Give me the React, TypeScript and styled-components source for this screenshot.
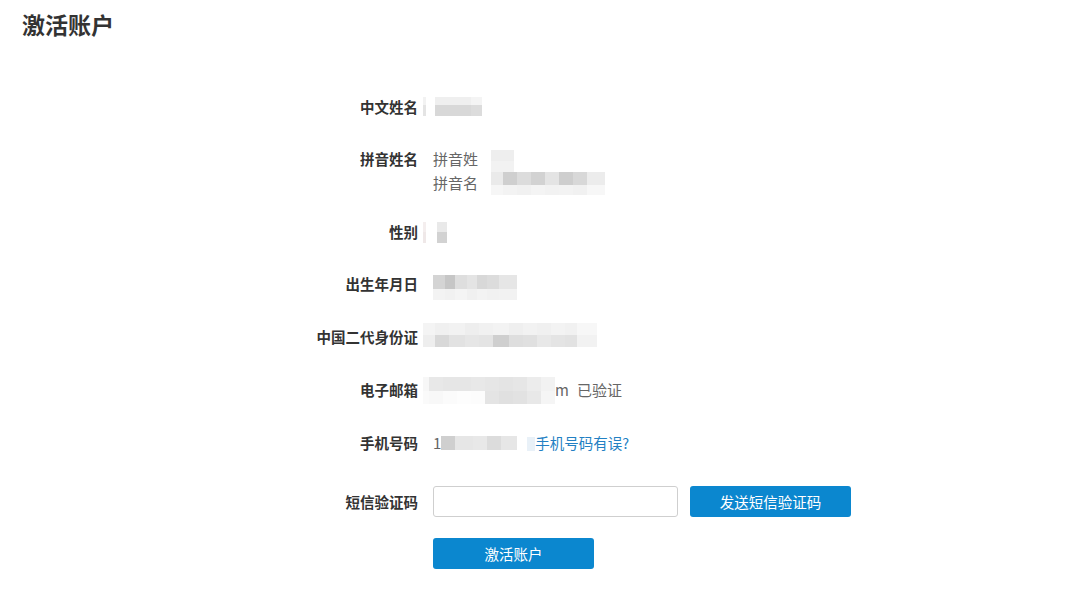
import React from "react";
import styled, { createGlobalStyle } from "styled-components";

const GlobalStyle = createGlobalStyle`
  body {
    margin: 0;
    background: #fff;
    font-family: "Noto Sans CJK SC", "Noto Sans", sans-serif;
    color: #333;
  }
`;

// pixelated blocks standing in for the blurred personal data
type MosaicData = {
  cols: string;
  rows: string;
  cells: string[][];
};

const nameMosaic: MosaicData = {
  cols: "3px 9px 12px 12px 12px 11px",
  rows: "8px 11px",
  cells: [
    ["#f2f2f2", "#fff", "#efefef", "#efefef", "#efefef", "#f4f4f4"],
    ["#e4e4e4", "#fff", "#d8d8d8", "#d8d8d8", "#d8d8d8", "#dcdcdc"],
  ],
};

const surnameMosaic: MosaicData = {
  cols: "23px",
  rows: "11px 11px",
  cells: [["#eeeeee"], ["#f2f2f2"]],
};

const givenMosaic: MosaicData = {
  cols: "12px 14px 14px 14px 14px 14px 14px 18px",
  rows: "13px 10px",
  cells: [
    ["#eaeaea", "#cfcfcf", "#dcdcdc", "#d2d2d2", "#e4e4e4", "#cecece", "#d8d8d8", "#ececec"],
    ["#f6f6f6", "#f3f3f3", "#f1f1f1", "#f4f4f4", "#f2f2f2", "#f3f3f3", "#f1f1f1", "#f7f7f7"],
  ],
};

const genderMosaic: MosaicData = {
  cols: "3px 11px 10px",
  rows: "10px 11px",
  cells: [
    ["#f4eeee", "#fff", "#e9e9e9"],
    ["#efe8e8", "#fff", "#d2d2d2"],
  ],
};

const birthMosaic: MosaicData = {
  cols: "12px 10px 12px 10px 10px 12px 18px",
  rows: "14px 11px",
  cells: [
    ["#d4d4d4", "#c6c6c6", "#dedede", "#e4e4e4", "#d8d8d8", "#dcdcdc", "#e6e6e6"],
    ["#f3f3f3", "#f1f1f1", "#f4f4f4", "#f0f0f0", "#f3f3f3", "#f1f1f1", "#f2f2f2"],
  ],
};

const idMosaic: MosaicData = {
  cols: "12px 14px 16px 14px 14px 16px 14px 14px 14px 14px 12px 20px",
  rows: "12px 12px",
  cells: [
    ["#f4f4f4", "#f0f0f0", "#f2f2f2", "#eeeeee", "#f1f1f1", "#f3f3f3", "#efefef", "#f2f2f2", "#f0f0f0", "#f3f3f3", "#f1f1f1", "#f7f7f7"],
    ["#eeeeee", "#d8d8d8", "#e2e2e2", "#e6e6e6", "#e4e4e4", "#cfcfcf", "#dedede", "#e0e0e0", "#e8e8e8", "#e4e4e4", "#e2e2e2", "#f2f2f2"],
  ],
};

const emailMosaic: MosaicData = {
  cols: "6px 14px 14px 14px 14px 14px 14px 14px 14px 14px",
  rows: "14px 13px",
  cells: [
    ["#f7f7f7", "#e8e8e8", "#e6e6e6", "#e6e6e6", "#e8e8e8", "#e6e6e6", "#e4e4e4", "#e6e6e6", "#ececec", "#f2f2f2"],
    ["#fafafa", "#f8f8f8", "#fbfbfb", "#fdfdfd", "#fcfcfc", "#e4e4e4", "#e0e0e0", "#e2e2e2", "#e8e8e8", "#f5f5f5"],
  ],
};

const phoneMosaic: MosaicData = {
  cols: "14px 18px 14px 14px 16px",
  rows: "14px",
  cells: [["#cfcfcf", "#e6e6e6", "#e8e8e8", "#dcdcdc", "#e6e6e6"]],
};

const Page = styled.div`
  width: 1080px;
  min-height: 590px;
`;

const Title = styled.h1`
  margin: 0;
  padding: 10px 22px 0;
  font-size: 23px;
  line-height: 28px;
  font-weight: 700;
  color: #333;
`;

const Form = styled.div`
  display: flex;
  flex-direction: column;
  padding-top: 57px;
`;

const Row = styled.div<{ $gap?: number; $center?: boolean }>`
  display: grid;
  grid-template-columns: 418px 1fr;
  column-gap: 5px;
  align-items: ${(p) => (p.$center ? "center" : "start")};
  margin-top: ${(p) => p.$gap ?? 28}px;
  &:first-child {
    margin-top: 0;
  }
`;

const Label = styled.div`
  text-align: right;
  font-size: 14.5px;
  line-height: 24px;
  font-weight: 700;
  color: #333;
`;

// value cells keep to their text lines; mosaics may spill over without pushing rows down
const Value = styled.div<{ $indent?: boolean; $lines?: number }>`
  display: flex;
  align-items: flex-start;
  height: ${(p) => (p.$lines ?? 1) * 24}px;
  padding-left: ${(p) => (p.$indent ? 10 : 0)}px;
  font-size: 15px;
  line-height: 24px;
  color: #666;
`;

const Lines = styled.div`
  display: flex;
  flex-direction: column;
`;

const Line = styled.div`
  display: flex;
  align-items: flex-start;
  height: 24px;
`;

const Grid = styled.div<{ $cols: string; $rows: string; $top: number; $left: number }>`
  display: grid;
  grid-template-columns: ${(p) => p.$cols};
  grid-template-rows: ${(p) => p.$rows};
  margin-top: ${(p) => p.$top}px;
  margin-left: ${(p) => p.$left}px;
  flex: none;
`;

const Cell = styled.span<{ $c: string }>`
  background: ${(p) => p.$c};
`;

const Mosaic = ({ data, top = 0, left = 0 }: { data: MosaicData; top?: number; left?: number }) => (
  <Grid $cols={data.cols} $rows={data.rows} $top={top} $left={left}>
    {data.cells.flatMap((row, r) =>
      row.map((c, i) => <Cell key={r + "-" + i} $c={c} />)
    )}
  </Grid>
);

const Note = styled.span<{ $gap?: number }>`
  margin-left: ${(p) => p.$gap ?? 0}px;
`;

const Hint = styled.span`
  width: 8px;
  height: 14px;
  margin: 6px 0 0 10px;
  background: #e9f1f8;
`;

const Link = styled.a`
  color: #2280c3;
  font-size: 14.5px;
  text-decoration: none;
  cursor: pointer;
`;

const Input = styled.input`
  box-sizing: border-box;
  width: 245px;
  height: 31px;
  border: 1px solid #cfcfcf;
  border-radius: 3px;
  padding: 0 8px;
  font-size: 14px;
  outline: none;
`;

const Button = styled.button<{ $gap?: number }>`
  box-sizing: border-box;
  width: 161px;
  height: 31px;
  margin-left: ${(p) => p.$gap ?? 0}px;
  border: none;
  border-radius: 3px;
  background: #0b87cf;
  color: #fff;
  font-family: "Noto Sans CJK SC", sans-serif;
  font-size: 14.5px;
  cursor: pointer;
`;

const Controls = styled.div`
  display: flex;
  align-items: center;
  padding-left: 10px;
`;

export default function App() {
  return (
    <Page>
      <GlobalStyle />
      <Title>激活账户</Title>
      <Form>
        <Row>
          <Label>中文姓名</Label>
          <Value>
            <Mosaic data={nameMosaic} top={2} />
          </Value>
        </Row>
        <Row>
          <Label>拼音姓名</Label>
          <Value $indent $lines={2}>
            <Lines>
              <Line>
                拼音姓
                <Mosaic data={surnameMosaic} top={3} left={13} />
              </Line>
              <Line>
                拼音名
                <Mosaic data={givenMosaic} top={1} left={13} />
              </Line>
            </Lines>
          </Value>
        </Row>
        <Row $gap={25}>
          <Label>性别</Label>
          <Value>
            <Mosaic data={genderMosaic} top={2} />
          </Value>
        </Row>
        <Row>
          <Label>出生年月日</Label>
          <Value $indent>
            <Mosaic data={birthMosaic} top={3} />
          </Value>
        </Row>
        <Row $gap={29}>
          <Label>中国二代身份证</Label>
          <Value>
            <Mosaic data={idMosaic} top={-2} />
          </Value>
        </Row>
        <Row $gap={29}>
          <Label>电子邮箱</Label>
          <Value>
            <Mosaic data={emailMosaic} top={-1} />
            <Note>m</Note>
            <Note $gap={8}>已验证</Note>
          </Value>
        </Row>
        <Row $gap={29}>
          <Label>手机号码</Label>
          <Value $indent>
            1
            <Mosaic data={phoneMosaic} top={5} />
            <Hint />
            <Link>手机号码有误?</Link>
          </Value>
        </Row>
        <Row $gap={31} $center>
          <Label>短信验证码</Label>
          <Controls>
            <Input />
            <Button $gap={12}>发送短信验证码</Button>
          </Controls>
        </Row>
        <Row $gap={21}>
          <span />
          <Controls>
            <Button>激活账户</Button>
          </Controls>
        </Row>
      </Form>
    </Page>
  );
}
